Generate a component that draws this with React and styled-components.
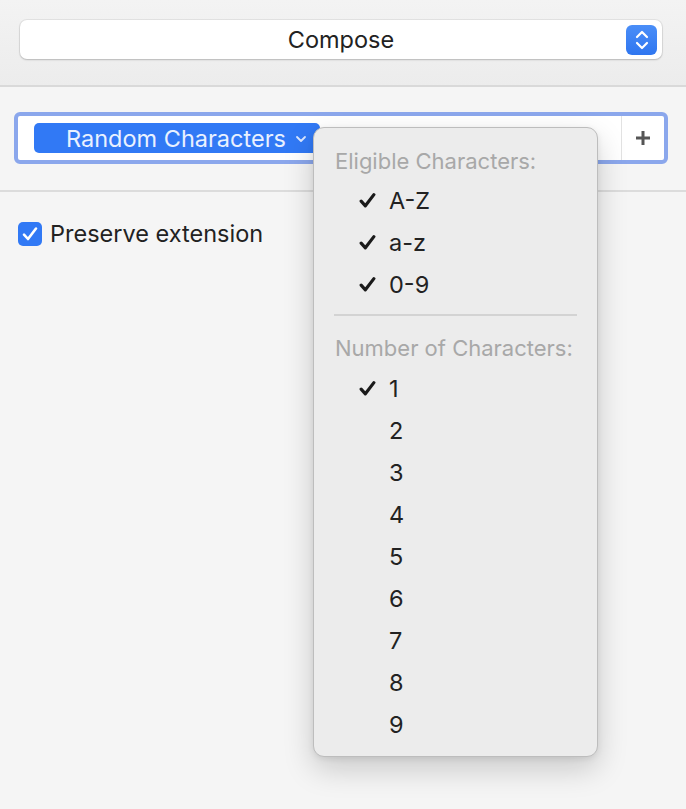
import React from "react"
import styled, { createGlobalStyle } from "styled-components"

const GlobalStyle = createGlobalStyle`
    html, body {
        margin: 0;
        padding: 0;
        background: #f5f5f5;
        font-family: Inter, "Noto Sans", "Liberation Sans", sans-serif;
        color: #222;
    }
`

const Window = styled.div`
    width: 686px;
    height: 809px;
    overflow: hidden;
    background: #f5f5f5;
`

const TopBar = styled.div`
    height: 87px;
    padding: 20px 24px 0 20px;
    box-sizing: border-box;
    background: linear-gradient(#f3f3f3, #ececec);
    border-bottom: 2px solid #d9d9d9;
`

const PopupButton = styled.div`
    position: relative;
    height: 39px;
    display: flex;
    align-items: center;
    justify-content: center;
    background: #fff;
    border-radius: 7px;
    box-shadow: 0 0 0 1px rgba(0, 0, 0, 0.06), 0 1px 2px rgba(0, 0, 0, 0.18);
    font-size: 23.5px;
    color: #222;
`

const Stepper = styled.div`
    position: absolute;
    right: 5px;
    top: 5px;
    width: 31px;
    height: 30px;
    border-radius: 6px;
    background: linear-gradient(#4a8ef8, #2f76f0);
    display: flex;
    align-items: center;
    justify-content: center;
`

const TokenSection = styled.div`
    padding: 25px 18px 26px 14px;
    border-bottom: 2px solid #dcdcdc;
`

const TokenField = styled.div`
    position: relative;
    height: 52px;
    box-sizing: border-box;
    border: 4px solid #8ba7ec;
    border-radius: 6px;
    background: #fff;
    display: flex;
    align-items: center;
    padding-left: 16px;
`

const Token = styled.div`
    width: 286px;
    height: 30px;
    box-sizing: border-box;
    border-radius: 5px;
    background: #3179f5;
    color: #e9f1ff;
    font-size: 23.5px;
    display: flex;
    align-items: center;
    padding-left: 32px;
    padding-top: 1px;
    gap: 9px;
`

const AddButton = styled.div`
    margin-left: auto;
    width: 42px;
    height: 100%;
    border-left: 1px solid #e2e2e2;
    display: flex;
    align-items: center;
    justify-content: center;
`

const Menu = styled.div`
    position: absolute;
    left: 295px;
    top: 11px;
    width: 285px;
    box-sizing: border-box;
    padding: 9px 0 11px;
    background: #ececec;
    border: 1px solid #bdbdbd;
    border-radius: 11px;
    box-shadow: 0 12px 30px rgba(0, 0, 0, 0.18), 0 2px 6px rgba(0, 0, 0, 0.08);
    z-index: 2;
`

const MenuHeader = styled.div`
    height: 42px;
    display: flex;
    align-items: center;
    padding-left: 21px;
    padding-top: ${(p) => p.$offset || 3}px;
    box-sizing: border-box;
    font-size: 22px;
    color: #a8a8a8;
`

const MenuItem = styled.div`
    height: 42px;
    display: flex;
    align-items: center;
    padding-left: 45px;
    font-size: 23.5px;
    color: #222;
`

const CheckSlot = styled.span`
    width: 30px;
    display: flex;
    align-items: center;
`

const MenuSeparator = styled.div`
    height: 20px;
    display: flex;
    align-items: center;
    padding: 0 20px;

    &::after {
        content: "";
        flex: 1;
        height: 2px;
        background: #d3d3d3;
    }
`

const Options = styled.div`
    padding: 27px 18px;
`

const CheckRow = styled.label`
    display: flex;
    align-items: center;
    gap: 8px;
    font-size: 23.5px;
    color: #222;
`

const CheckBox = styled.span`
    width: 24px;
    height: 24px;
    border-radius: 5px;
    background: #3179f5;
    display: flex;
    align-items: center;
    justify-content: center;
`

const Check = ({ color = "#1a1a1a", size = 17, weight = 3 }) => (
    <svg width={size} height={size} viewBox="0 0 16 16">
        <path d="M2 8.6 L6 13 L14 2.5" fill="none" stroke={color} strokeWidth={weight} strokeLinecap="round" strokeLinejoin="round" />
    </svg>
)

const eligible = ["A-Z", "a-z", "0-9"]
const counts = ["1", "2", "3", "4", "5", "6", "7", "8", "9"]

export default function App() {
    return (
        <Window>
            <GlobalStyle />
            <TopBar>
                <PopupButton>
                    Compose
                    <Stepper>
                        <svg width="16" height="22" viewBox="0 0 16 22">
                            <path d="M3 8 L8 3 L13 8 M3 14 L8 19 L13 14" fill="none" stroke="#fff" strokeWidth="2.2" strokeLinecap="round" strokeLinejoin="round" />
                        </svg>
                    </Stepper>
                </PopupButton>
            </TopBar>

            <TokenSection>
                <TokenField>
                    <Token>
                        Random Characters
                        <svg width="12" height="8" viewBox="0 0 12 8">
                            <path d="M2 2 L6 6 L10 2" fill="none" stroke="#dbe7ff" strokeWidth="1.8" strokeLinecap="round" strokeLinejoin="round" />
                        </svg>
                    </Token>
                    <AddButton>
                        <svg width="18" height="18" viewBox="0 0 18 18">
                            <path d="M9 2 V16 M2 9 H16" stroke="#555" strokeWidth="3" />
                        </svg>
                    </AddButton>
                    <Menu>
                        <MenuHeader $offset={5}>Eligible Characters:</MenuHeader>
                        {eligible.map((e) => (
                            <MenuItem key={e}>
                                <CheckSlot><Check /></CheckSlot>
                                {e}
                            </MenuItem>
                        ))}
                        <MenuSeparator />
                        <MenuHeader>Number of Characters:</MenuHeader>
                        {counts.map((c) => (
                            <MenuItem key={c}>
                                <CheckSlot>{c === "1" && <Check />}</CheckSlot>
                                {c}
                            </MenuItem>
                        ))}
                    </Menu>
                </TokenField>
            </TokenSection>

            <Options>
                <CheckRow>
                    <CheckBox><Check color="#fff" size={16} weight={2.6} /></CheckBox>
                    Preserve extension
                </CheckRow>
            </Options>
        </Window>
    )
}
